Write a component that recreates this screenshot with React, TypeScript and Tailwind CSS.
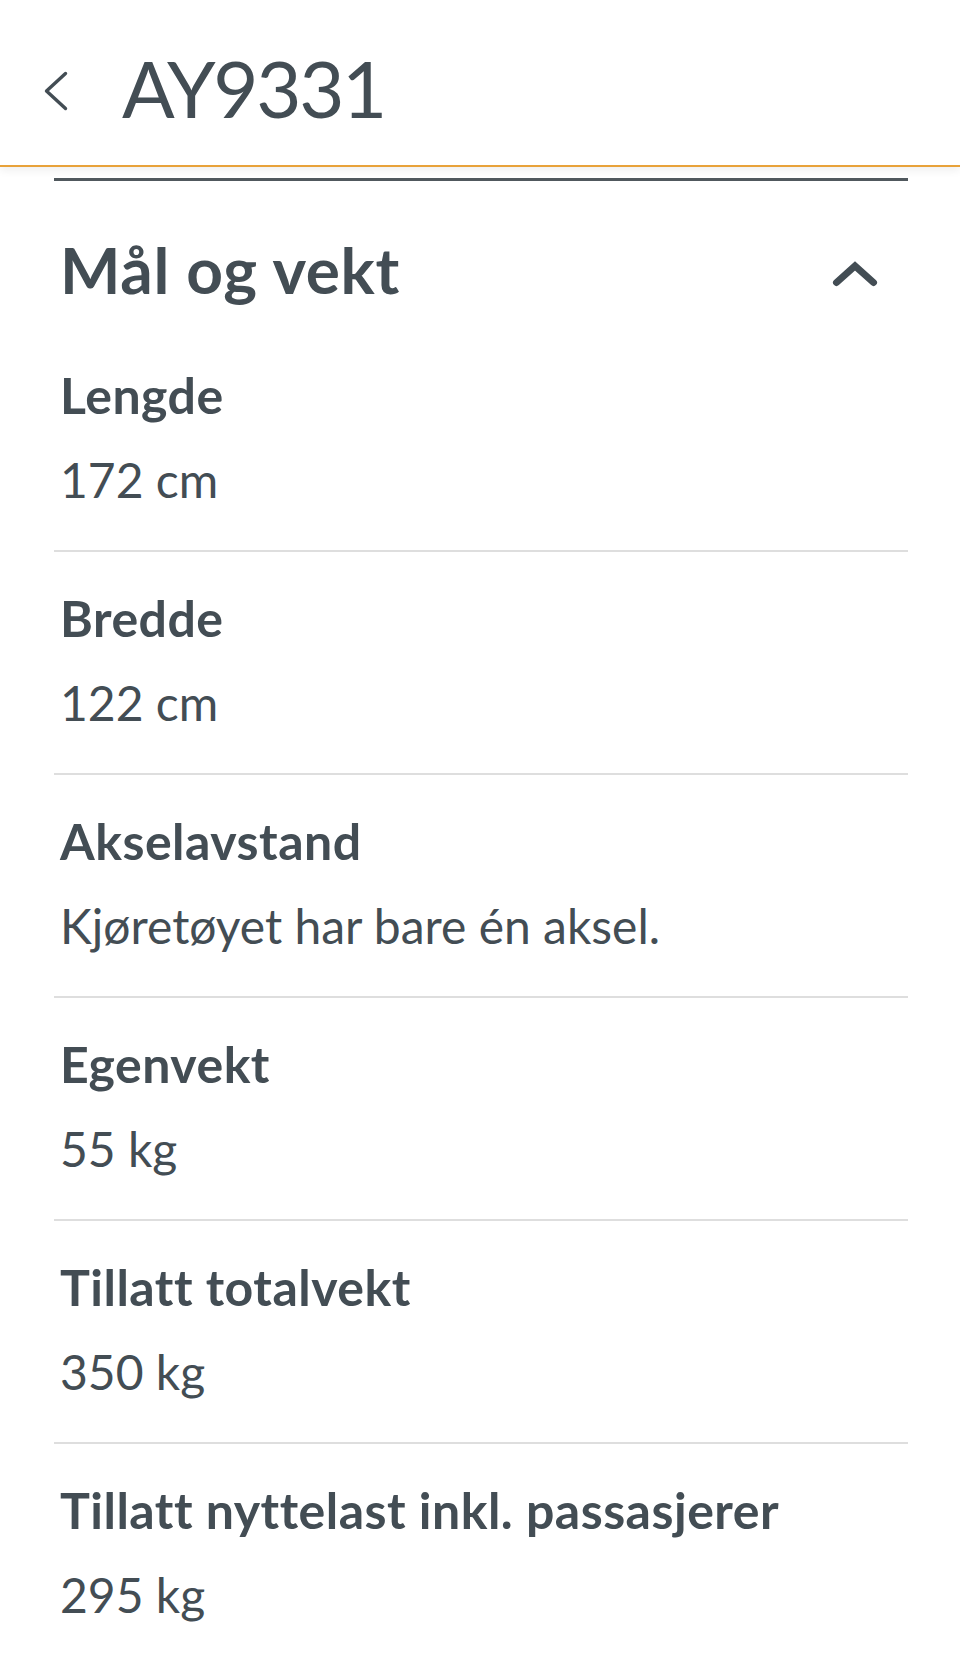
import React from "react";

const rows = [
  { label: "Lengde", value: "172 cm" },
  { label: "Bredde", value: "122 cm" },
  { label: "Akselavstand", value: "Kjøretøyet har bare én aksel." },
  { label: "Egenvekt", value: "55 kg" },
  { label: "Tillatt totalvekt", value: "350 kg" },
  { label: "Tillatt nyttelast inkl. passasjerer", value: "295 kg" },
];

const App: React.FC = () => {
  return (
    <div className="min-h-[1658px] bg-white font-['Lato',sans-serif] text-[#434d54]">
      <header className="relative z-10 flex h-[167px] items-start border-b-2 border-[#e8a23a] bg-white pl-[44px] pt-[49px] shadow-[0_4px_8px_rgba(0,0,0,0.06)]">
        <svg
          className="mt-[22px] h-[40px] w-[24px]"
          viewBox="0 0 24 40"
          fill="none"
          stroke="#434d54"
          strokeWidth="3.4"
          strokeLinecap="round"
          strokeLinejoin="round"
        >
          <polyline points="21.5,2.5 2.5,20 21.5,37.5" />
        </svg>
        <h1 className="ml-[54px] text-[78px] leading-[78px] tracking-[-0.03em]">
          AY9331
        </h1>
      </header>

      <main className="pl-[54px] pr-[52px] pt-[11px]">
        <div className="h-[3px] bg-[#50585d]" />

        <div className="mt-[57px] flex items-center justify-between">
          <h2 className="pl-[6px] text-[64px] font-bold leading-[64px] tracking-[0.01em]">
            Mål og vekt
          </h2>
          <svg
            className="mr-[30px] mt-[8px] h-[26px] w-[46px]"
            viewBox="0 0 46 26"
            fill="none"
            stroke="#434d54"
            strokeWidth="7"
            strokeLinecap="round"
            strokeLinejoin="miter"
          >
            <polyline points="4.5,21.5 23,5 41.5,21.5" />
          </svg>
        </div>

        <div className="mt-[68px]">
          {rows.map((row, i) => (
            <div
              key={row.label}
              className={
                i === 0
                  ? "pb-[46px] pl-[6px]"
                  : "border-t-2 border-[#dedede] pb-[46px] pl-[6px] pt-[41px]"
              }
            >
              <div className="text-[50px] font-bold leading-[50px] tracking-[0.01em]">
                {row.label}
              </div>
              <div className="mt-[36px] text-[48px] leading-[48px]">
                {row.value}
              </div>
            </div>
          ))}
        </div>
      </main>
    </div>
  );
};

export default App;
